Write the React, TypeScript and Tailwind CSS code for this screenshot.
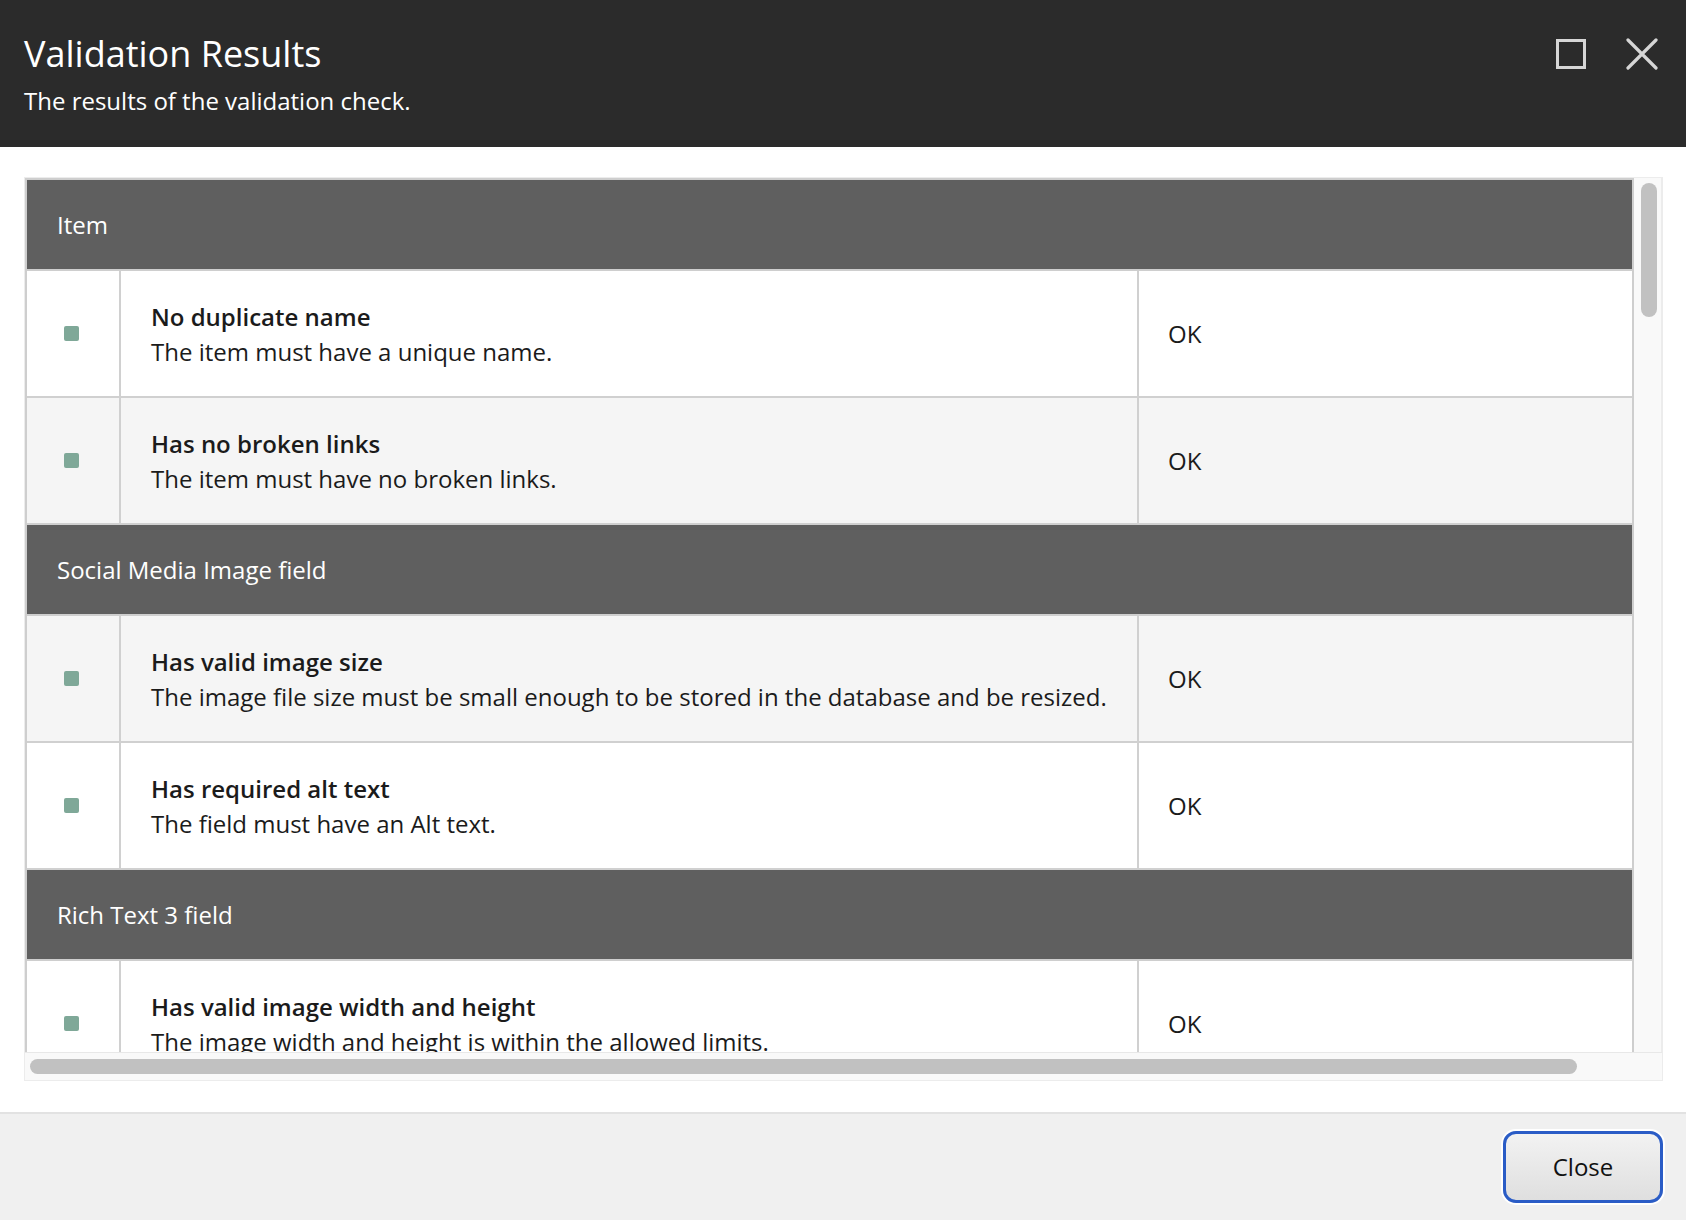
import React from "react";

type Row = { title: string; desc: string; status: string; gray: boolean };
type Group = { name: string; rows: Row[] };

const groups: Group[] = [
  {
    name: "Item",
    rows: [
      { title: "No duplicate name", desc: "The item must have a unique name.", status: "OK", gray: false },
      { title: "Has no broken links", desc: "The item must have no broken links.", status: "OK", gray: true },
    ],
  },
  {
    name: "Social Media Image field",
    rows: [
      {
        title: "Has valid image size",
        desc: "The image file size must be small enough to be stored in the database and be resized.",
        status: "OK",
        gray: true,
      },
      { title: "Has required alt text", desc: "The field must have an Alt text.", status: "OK", gray: false },
    ],
  },
  {
    name: "Rich Text 3 field",
    rows: [
      {
        title: "Has valid image width and height",
        desc: "The image width and height is within the allowed limits.",
        status: "OK",
        gray: false,
      },
    ],
  },
];

function GroupHeader({ name }: { name: string }) {
  return (
    <div className="h-[91px] shrink-0 bg-[#5f5f5f] border-b-2 border-[#cecece] flex items-center pl-[30px] text-white text-[24px]">
      {name}
    </div>
  );
}

function ResultRow({ row }: { row: Row }) {
  return (
    <div
      className={`h-[127px] shrink-0 flex border-b-2 border-[#d0d0d0] ${row.gray ? "bg-[#f5f5f5]" : "bg-white"}`}
    >
      <div className="w-[94px] shrink-0 border-r-2 border-[#d0d0d0] flex items-center justify-center">
        <div className="w-[15px] h-[15px] rounded-[2px] bg-[#7fa898] ml-[-4px]" />
      </div>
      <div className="w-[1018px] shrink-0 border-r-2 border-[#d0d0d0] flex flex-col justify-center pl-[30px] text-[24px] leading-[35px] text-[#1b1b1b]">
        <div className="font-semibold whitespace-nowrap">{row.title}</div>
        <div className="whitespace-nowrap">{row.desc}</div>
      </div>
      <div className="flex-1 flex items-center pl-[29px] text-[24px] text-[#1b1b1b]">{row.status}</div>
    </div>
  );
}

export default function App() {
  return (
    <div
      className="w-[1686px] h-[1220px] flex flex-col bg-white overflow-hidden"
      style={{ fontFamily: '"Open Sans", "Noto Sans", sans-serif' }}
    >
      {/* Header */}
      <div className="h-[147px] shrink-0 bg-[#2b2b2b] flex items-start justify-between pl-[24px] pr-[27px]">
        <div className="pt-[30px] text-white">
          <div className="text-[36px] leading-[48px]">Validation Results</div>
          <div className="text-[24px] leading-[32px] mt-[7px]">The results of the validation check.</div>
        </div>
        <div className="flex items-center gap-[38px] pt-[38px]">
          <svg width="32" height="32" viewBox="0 0 32 32">
            <rect x="2.5" y="2.5" width="27" height="27" fill="none" stroke="#d6d6d6" strokeWidth="3" />
          </svg>
          <svg width="34" height="32" viewBox="0 0 34 32">
            <path d="M3 2 L31 30 M31 2 L3 30" stroke="#d6d6d6" strokeWidth="3.2" strokeLinecap="round" />
          </svg>
        </div>
      </div>

      {/* Content */}
      <div className="flex-1 bg-white pt-[30px] pl-[24px] pr-[23px]">
        <div className="h-[904px] flex flex-col border border-[#ececec] bg-[#f9f9f9]">
          <div className="flex-1 flex min-h-0">
            <div className="w-[1609px] shrink-0 overflow-hidden border-2 border-b-0 border-[#cecece] bg-white flex flex-col">
              {groups.map((g) => (
                <React.Fragment key={g.name}>
                  <GroupHeader name={g.name} />
                  {g.rows.map((r) => (
                    <ResultRow key={r.title} row={r} />
                  ))}
                </React.Fragment>
              ))}
            </div>
            <div className="flex-1 border-r border-[#ececec] pt-[5px] pl-[7px]">
              <div className="w-[16px] h-[134px] rounded-full bg-[#c1c1c1]" />
            </div>
          </div>
          <div className="h-[28px] shrink-0 border-t border-[#e8e8e8] pt-[6px] pl-[5px]">
            <div className="w-[1547px] h-[15px] rounded-full bg-[#c1c1c1]" />
          </div>
        </div>
      </div>

      {/* Footer */}
      <div className="h-[108px] shrink-0 bg-[#f0f0f0] border-t-2 border-[#e2e2e2] flex justify-end items-start pt-[17px] pr-[23px]">
        <button
          className="w-[160px] h-[72px] rounded-[13px] border-[3px] border-[#2a5cc6] shadow-[0_0_0_2px_#ffffff] bg-gradient-to-b from-[#f2f2f2] to-[#dfdfdf] text-[24px] text-[#111]"
          style={{ fontFamily: '"Open Sans", "Noto Sans", sans-serif' }}
        >
          Close
        </button>
      </div>
    </div>
  );
}
